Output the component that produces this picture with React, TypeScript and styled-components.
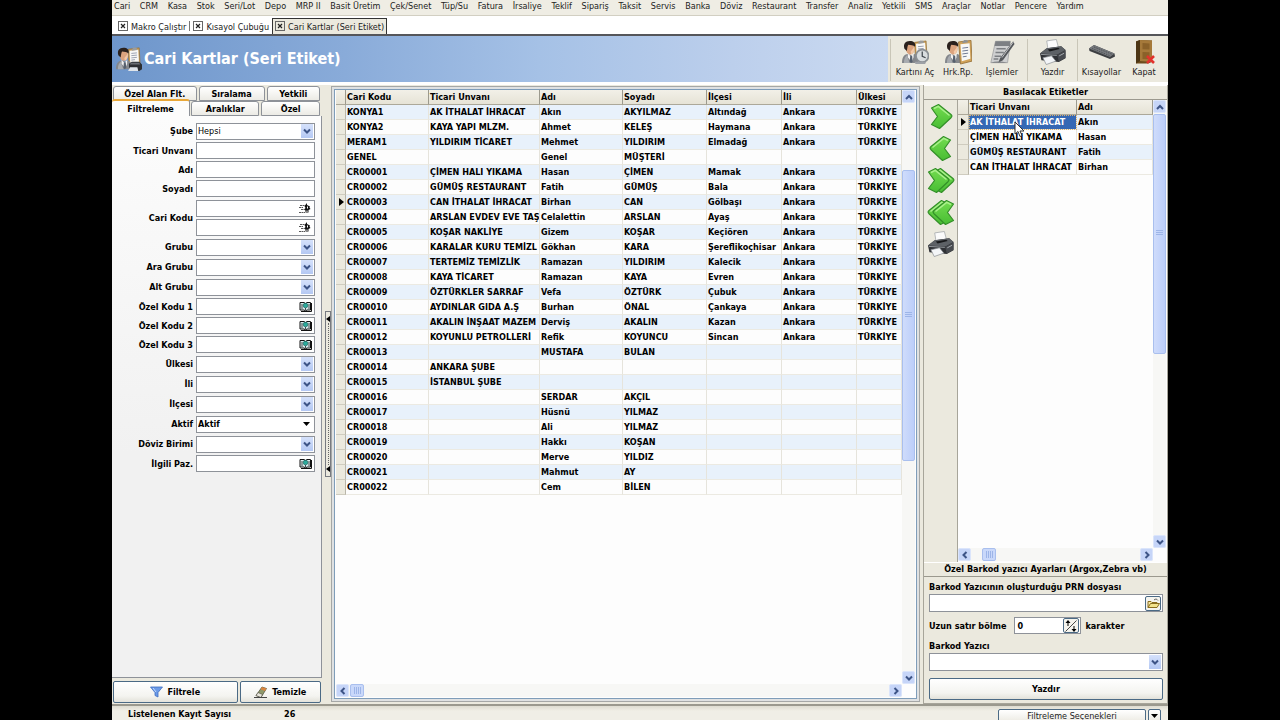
import React from 'react';
import styled, { createGlobalStyle, css } from 'styled-components';

const face = '#ebe9de';
const line = '#8e9299';

const Global = createGlobalStyle`
  *, *::before, *::after { box-sizing: border-box; }
  body {
    margin: 0;
    background: #000;
    color: #000;
    font: 400 9px/12px "DejaVu Sans Condensed", "DejaVu Sans", Tahoma, sans-serif;
    overflow: hidden;
  }
  button, input, select { font: inherit; color: inherit; margin: 0; padding: 0; border-radius: 0; outline: 0; }
  svg { display: block; flex: none; }
`;

const Desktop = styled.div`
  height: 100vh;
  padding: 0 112px;
  display: flex;
`;
const Window = styled.div`
  flex: 1;
  min-width: 0;
  background: ${face};
  display: flex;
  flex-direction: column;
`;

/* ---------- menu and document tabs ---------- */
const MenuBar = styled.nav`
  height: 16px;
  padding: 0 84px 0 2px;
  display: flex;
  justify-content: space-between;
  background: #efede4;
  border-bottom: 1px solid #d2cfc2;
`;
const MenuItem = styled.a`
  color: #222;
  text-decoration: none;
  white-space: nowrap;
`;
const DocTabs = styled.div`
  height: 20px;
  padding: 2px 0 0 3px;
  display: flex;
  background: #fff;
  border-bottom: 2px solid #55565a;
`;
const DocTab = styled.button<{ $active?: boolean }>`
  display: flex;
  align-items: center;
  gap: 2px;
  padding: 0 2px;
  white-space: nowrap;
  color: #222;
  background: ${p => (p.$active ? face : 'transparent')};
  border: 1px solid ${p => (p.$active ? '#333' : 'transparent')};
  border-bottom: 0;
`;
const TabDivider = styled.span`
  width: 1px;
  margin: 3px 0;
  background: #777;
`;

/* ---------- banner ---------- */
const Banner = styled.header`
  height: 46px;
  flex: none;
  display: flex;
  background: ${face};
`;
const BannerTitle = styled.div`
  flex: 1;
  min-width: 0;
  padding-left: 4px;
  display: flex;
  align-items: center;
  gap: 2px;
  background: linear-gradient(90deg, #6e96cb 0%, #89abd9 30%, #a5c1e6 55%, #bccfec 80%, #cbdaf1 100%);
`;
const Title = styled.h1`
  margin: 0;
  font-size: 16px;
  line-height: 20px;
  color: #fff;
  white-space: nowrap;
`;
const Tools = styled.div`
  display: flex;
  padding: 3px 5px 0 2px;
`;
const Tool = styled.button<{ $w: number }>`
  width: ${p => p.$w}px;
  height: 40px;
  border: 0;
  background: none;
  display: flex;
  flex-direction: column;
  align-items: center;
  gap: 1px;
  white-space: nowrap;
  color: #222;
`;
const ToolDivider = styled.span`
  width: 1px;
  height: 42px;
  background: #c9c6b8;
`;

/* ---------- work area ---------- */
const Work = styled.main`
  flex: 1;
  min-height: 0;
  display: flex;
  border-top: 3px solid #fff;
`;

const FilterPane = styled.section`
  width: 210px;
  display: flex;
  flex-direction: column;
  padding: 1px 0 1px 0;
`;
const TabRow = styled.div`
  display: flex;
  gap: 2px;
  padding: 0 2px 0 1px;
`;
const PageTab = styled.button<{ $w: number; $active?: boolean }>`
  flex: ${p => p.$w} 1 0;
  height: 15px;
  font-weight: 700;
  white-space: nowrap;
  border: 1px solid ${line};
  border-radius: 3px 3px 0 0;
  background: linear-gradient(#fff, #ecebe5);
  ${p =>
    p.$active &&
    css`
      height: 17px;
      margin: -2px -1px 0 -1px;
      border-top: 2px solid #e9a83a;
      border-left: 0;
      border-bottom: 0;
      background: #fcfcfc;
    `}
`;
const FilterPage = styled.form`
  flex: 1;
  min-height: 0;
  padding: 5px 6px 0 0;
  background: linear-gradient(#fcfcfc, #f1f1f1 60%);
  border-right: 1px solid ${line};
  border-bottom: 1px solid ${line};
`;
const FieldRow = styled.div<{ $h: number }>`
  min-height: ${p => p.$h}px;
  display: grid;
  grid-template-columns: 81px 1fr;
  column-gap: 3px;
  align-items: center;
  font-weight: 700;
`;
const FieldLabel = styled.label`
  text-align: right;
  white-space: nowrap;
`;
const FieldStack = styled.div`
  display: grid;
  gap: 2px;
`;
const Field = styled.div`
  height: 17px;
  min-width: 0;
  display: flex;
  align-items: center;
  padding-right: 1px;
  background: #fff;
  border: 1px solid ${line};
`;
const TextInput = styled.input`
  flex: 1;
  min-width: 0;
  width: 100%;
  height: 100%;
  padding-left: 2px;
  border: 0;
  background: none;
`;
const Choice = styled.select<{ $light?: boolean }>`
  flex: 1;
  min-width: 0;
  height: 100%;
  padding-left: 1px;
  appearance: none;
  border: 0;
  background: none;
  font-weight: ${p => (p.$light ? 400 : 700)};
`;
const DropMark = styled.span`
  width: 12px;
  height: 14px;
  display: grid;
  place-items: center;
  background: linear-gradient(#d5e1fb, #b4c8f3);
`;
const PlainMark = styled(DropMark)`
  width: 14px;
  background: none;
`;
const IconButton = styled.button`
  border: 0;
  background: none;
  display: grid;
  place-items: center;
  width: 16px;
  height: 14px;
`;
const FilterActions = styled.div`
  display: flex;
  gap: 2px;
  padding: 3px 1px 0;
`;
const PushButton = styled.button<{ $grow?: number }>`
  flex: ${p => p.$grow ?? 1} 1 0;
  height: 22px;
  display: flex;
  align-items: center;
  justify-content: center;
  gap: 4px;
  font-weight: 700;
  background: linear-gradient(#fff, #f4f4f0 70%, #e3e2da);
  border: 1px solid #4b6a85;
  border-radius: 2px;
`;

const Splitter = styled.div`
  width: 9px;
  display: flex;
  justify-content: flex-end;
  align-items: flex-start;
  padding-top: 226px;
`;
const Grip = styled.button`
  width: 6px;
  height: 166px;
  border: 1px solid #777a80;
  background: ${face};
  display: flex;
  flex-direction: column;
  align-items: center;
  justify-content: space-between;
  padding: 4px 0;
`;
const GripDots = styled.span`
  flex: 1;
  margin: 1px 0;
  border-left: 1px dotted #666;
`;

/* ---------- data grids ---------- */
const GridPane = styled.section`
  flex: 1;
  min-width: 0;
  display: flex;
  margin: 1px 3px 2px 0;
  padding: 2px;
  border: 1px solid #a5a7a6;
  background: #dfe1e2;
`;
const GridBox = styled.div`
  flex: 1;
  min-width: 0;
  min-height: 0;
  display: grid;
  grid-template-columns: minmax(0, 1fr) 13px;
  grid-template-rows: minmax(0, 1fr) 13px;
  background: #fdfdfd;
  border: 1px solid #7f9db9;
  padding: 0 1px 1px;
`;
const TableView = styled.div`
  overflow: hidden;
`;
const Table = styled.table`
  width: 100%;
  table-layout: fixed;
  border-collapse: separate;
  border-spacing: 0;
  font-weight: 700;
`;
const Col = styled.col<{ $w?: number }>`
  width: ${p => (p.$w ? p.$w + 'px' : 'auto')};
`;
const HeadCell = styled.th`
  height: 15px;
  padding: 0 0 0 1px;
  text-align: left;
  white-space: nowrap;
  overflow: hidden;
  background: linear-gradient(#f2f0e8, #e6e3d6);
  border-right: 1px solid #9c9a8e;
  border-bottom: 1px solid #aca899;
`;
const Row = styled.tr`
  background: #fdfdfd;
  &:nth-child(odd) { background: #e8f1fb; }
`;
const Cell = styled.td<{ $selected?: boolean }>`
  height: 15px;
  padding: 0 0 0 1px;
  white-space: nowrap;
  overflow: hidden;
  border-right: 1px solid #e6e4dc;
  border-bottom: 1px solid #eceae2;
  ${p =>
    p.$selected &&
    css`
      color: #fff;
      background: #3568b4;
      outline: 1px dotted #d8b070;
      outline-offset: -1px;
    `}
`;
const Marker = styled.td`
  height: 15px;
  padding: 0 0 0 3px;
  background: ${face};
  border-right: 1px solid #b9b6a9;
  border-bottom: 1px solid #cfccbf;
`;

const Bar = styled.div<{ $vertical?: boolean }>`
  display: flex;
  flex-direction: ${p => (p.$vertical ? 'column' : 'row')};
  background: #f7f7f5;
`;
const BarButton = styled.button`
  flex: none;
  width: 13px;
  height: 13px;
  display: grid;
  place-items: center;
  border: 1px solid #dbe5fb;
  border-radius: 2px;
  background: #c6d5f8;
`;
const Track = styled.span<{ $grow: number }>`
  flex: ${p => p.$grow} 1 0;
`;
const Thumb = styled.span<{ $grow?: number; $vertical?: boolean }>`
  flex: ${p => (p.$grow ? `${p.$grow} 1 0` : '0 0 14px')};
  display: grid;
  place-items: center;
  border: 1px solid #a9bfee;
  border-radius: 2px;
  background: ${p =>
    p.$vertical ? 'linear-gradient(90deg, #cfdcfb, #bccefa)' : '#c9d8fa'};
`;

/* ---------- label printing pane ---------- */
const LabelPane = styled.section`
  width: 245px;
  display: flex;
  flex-direction: column;
  border: 1px solid #a7a59a;
  border-width: 0 1px 1px 1px;
`;
const PaneTitle = styled.h2`
  margin: 0;
  height: 15px;
  font-size: 9px;
  line-height: 13px;
  text-align: center;
  border-top: 1px solid #fff;
  border-bottom: 1px solid #9b998e;
  background: ${face};
`;
const LabelArea = styled.div`
  flex: 1;
  min-height: 0;
  display: flex;
`;
const MoveTools = styled.div`
  width: 34px;
  padding-top: 2px;
  display: flex;
  flex-direction: column;
  align-items: center;
  gap: 4px;
  border-right: 1px solid #a7a59a;
`;
const MoveButton = styled.button`
  width: 28px;
  height: 28px;
  border: 0;
  background: none;
  display: grid;
  place-items: center;
`;
const ListHolder = styled.div`
  flex: 1;
  min-width: 0;
  display: flex;
  position: relative;
`;
const ListBox = styled(GridBox)`
  border: 0;
  padding: 0 1px 1px 0;
`;
const Pointer = styled.svg`
  position: absolute;
  left: 56px;
  top: 21px;
`;
const PrinterForm = styled.form`
  padding: 4px 4px 3px 5px;
  display: flex;
  flex-direction: column;
  font-weight: 700;
`;
const FormLabel = styled.label`
  display: block;
`;
const WideField = styled(Field)`
  height: 18px;
  margin: 1px 0 5px;
`;
const InlineRow = styled.div`
  display: flex;
  align-items: center;
  gap: 4px;
  margin-bottom: 6px;
`;
const SubmitRow = styled.div`
  display: flex;
  padding-top: 2px;
`;
const NumberField = styled(Field)`
  width: 67px;
  margin-left: 4px;
`;
const Boxed = styled(IconButton)`
  border: 1px solid #4b6a85;
  border-radius: 2px;
  background: #f5f4ee;
  height: 15px;
`;

/* ---------- status bar ---------- */
const Status = styled.footer`
  height: 16px;
  flex: none;
  display: flex;
  align-items: flex-start;
  border-top: 2px solid #9b998e;
  background: linear-gradient(#dedcd0, #f0eee6 5px);
`;
const StatusText = styled.span`
  width: 142px;
  padding: 2px 0 0 16px;
  font-weight: 700;
`;
const StatusValue = styled.output`
  flex: 1;
  padding: 2px 0 0 30px;
  font-weight: 700;
`;
const StatusButton = styled.button<{ $w: number }>`
  width: ${p => p.$w}px;
  height: 14px;
  margin: 3px 2px 0 0;
  color: #222;
  border: 1px solid #4b6a85;
  border-radius: 2px;
  background: linear-gradient(#fff, #eceae2);
  display: grid;
  place-items: center;
  line-height: 10px;
`;
const StatusEnd = styled.span`
  width: 5px;
`;

/* ---------- drawings ---------- */
const Chevron = ({ dir }: { dir: 'up' | 'down' | 'left' | 'right' }) => {
  const d = {
    up: 'M1 6 4 3l3 3',
    down: 'M1 2.500 4 5.500l3-3',
    left: 'M5.500 1 2.500 4l3 3',
    right: 'M2.500 1l3 3-3 3',
  }[dir];
  return (
    <svg width="8" height="8" viewBox="0 0 8 8" fill="none" stroke="#3d5486" strokeWidth="2" aria-hidden>
      <path d={d} />
    </svg>
  );
};
const CloseBox = () => (
  <svg width="11" height="11" viewBox="0 0 11 11" fill="none" stroke="#222" aria-hidden>
    <rect x=".5" y=".5" width="9" height="9" stroke="#666" />
    <path d="M3 3l4 4m0-4-4 4" strokeWidth="1.200" />
  </svg>
);
const Triangle = () => (
  <svg width="6" height="8" viewBox="0 0 6 8" aria-hidden>
    <path d="M0 0l5 4-5 4z" />
  </svg>
);
const DownTriangle = () => (
  <svg width="7" height="4" viewBox="0 0 7 4" aria-hidden>
    <path d="M0 0h7L3.500 4z" />
  </svg>
);
const Person = () => (
  <g>
    <path d="M0 25c0-6 2-9 6-9.500l4 1.500 3-1.500c3 1 4 4 4 9.500z" fill="#84878c" />
    <path d="M2 25c0-4 1-6 3-8l3 8z" fill="#a7abb0" />
    <path d="M6 15l3 3 3-3v4l-2 5-4-5z" fill="#f2f2f2" />
    <path d="M8.500 17.500h2l.5 6-1.500 1.500L8 23.500z" fill="#56606e" />
    <ellipse cx="8.500" cy="10" rx="4.500" ry="6" fill="#dba37e" />
    <path d="M9 13c1.500-2 3-3 3.500-5.500.8 4-.5 7.500-3 8.300z" fill="#f3c9a8" />
    <path d="M2.500 10C1 5 3.500 2 8 2c4 0 6.500 2 5.500 6C12 6.500 9 6.500 6.500 6c-1 1.500-1 4-1.500 6.500z" fill="#2a211d" />
  </g>
);
const Clipboard = () => (
  <g>
    <path d="M13 3.500 25 2l1 18-12 2z" fill="#c99d55" stroke="#8f6b34" strokeWidth=".7" />
    <path d="M14.500 5 24 4l.8 14.500L15.500 20z" fill="#f8f8f6" />
    <path d="M17 3.500 19 1.500l3 .2 1 2.500-6 .8z" fill="#9b9c9c" />
    <path d="M16.500 8l6-.6m-6 3 6-.6m-6 3 6-.6m-6 3 4-.5" stroke="#8b93a5" strokeWidth=".9" />
  </g>
);
const TitleIcon = () => (
  <svg width="26" height="26" viewBox="0 0 28 28" aria-hidden>
    <Clipboard />
    <Person />
    <path d="M14 19l3-2h8l3 3v5l-3 2H14z" fill="#2e3034" />
    <path d="M16 18h9l1 2H15z" fill="#6a6e74" />
    <path d="M15 23h8l1 4H13z" fill="#dfe4ea" />
  </svg>
);
const CardIcon = () => (
  <svg width="27" height="26" viewBox="0 0 28 27" aria-hidden>
    <Clipboard />
    <Person />
    <circle cx="21" cy="17.500" r="6.500" fill="#d9dddf" stroke="#8a8f94" strokeWidth="1.800" />
    <path d="M21 13v5l3.500 1.500" fill="none" stroke="#3f464d" strokeWidth="1.300" />
    <path d="M13 23.500h12l-1 2.500H14z" fill="#9da1a6" />
  </svg>
);
const ReportIcon = () => (
  <svg width="27" height="26" viewBox="0 0 28 27" aria-hidden>
    <Person />
    <path d="M14 3 27 1.500 28 23l-12 3z" fill="#d1a35a" stroke="#8f6b34" strokeWidth=".8" />
    <path d="M16 5.500 25.500 4.500l.8 16L17.500 23z" fill="#f8f8f6" />
    <path d="M18 3.500 20 1l3 .2 1 2.300-6 1z" fill="#8f9294" />
    <path d="M18 9.500l6-.8m-6 3.800 6-.8m-6 3.800 6-.8m-5.500 3.800 4-.6" stroke="#6b7690" strokeWidth="1" />
  </svg>
);
const TasksIcon = () => (
  <svg width="26" height="26" viewBox="0 0 28 27" aria-hidden>
    <path d="M7 2h16l-3 23H2z" fill="#cfd0d1" stroke="#9b9c9e" strokeWidth=".8" />
    <path d="M7 2h16l-.6 5H6z" fill="#7d8084" />
    <path d="M8 10h10m-11 4h9m-10 4h7m-8 3h5" stroke="#7c7f83" strokeWidth="1.600" />
    <path d="M26 2 12 20l-2 5 5-2.500L27.500 5z" fill="#55585c" />
    <path d="M26 3 14 19.500" stroke="#c9cbcd" strokeWidth="1" />
    <path d="M2 25c6-2 12-1 18 0z" fill="#7b7e82" />
  </svg>
);
const PrinterIcon = () => (
  <svg width="27" height="26" viewBox="0 0 28 27" aria-hidden>
    <path d="M8 2 18 .5 20.500 10l-11 2z" fill="#fbfbfb" stroke="#a3a6ab" strokeWidth=".8" />
    <path d="M1 15 8 9.500 23 7.500l4.500 4V20l-7 4-18-2z" fill="#303236" />
    <path d="M1 15 8 9.500 23 7.500l4.500 4-8.500 4.500z" fill="#5d6166" />
    <path d="M9 11 20 9l1.500 1.500L11 13z" fill="#18191b" />
    <path d="M19 16.500 27.500 12v7.500l-7 4z" fill="#484b50" />
    <path d="M21 17.500l5-2.700" stroke="#a9adb2" />
    <path d="M4 19.500 13 17.500l4.500 5.500-10 3.500z" fill="#f3f5f7" stroke="#85898e" strokeWidth=".7" />
    <path d="M2 16 18.500 17" stroke="#a4a8ad" strokeWidth=".9" />
  </svg>
);
const ShortcutIcon = () => (
  <svg width="28" height="26" viewBox="0 0 28 26" aria-hidden>
    <path d="M1 9.500 6 6l20.500 8.500.5 3L22 20 1.500 12z" fill="#3d3f42" />
    <path d="M1 9.500 6 6l20.500 8.500L22 18z" fill="#75787c" />
    <path d="M4 9.500l17.500 7M6 8l18 7.200" stroke="#4d5054" strokeWidth=".9" strokeDasharray="1.500 1" />
  </svg>
);
const CloseIcon = () => (
  <svg width="24" height="26" viewBox="0 0 24 26" aria-hidden>
    <path d="M4 2.500 8 1l12 .5V23l-4 1.500H4z" fill="#6e4c1c" />
    <path d="M8 1l12 .5V23L8 22z" fill="#a5793a" />
    <path d="M10.500 4l7 .4v6l-7-.2zM10.500 13l7 .2v7l-7-.3z" fill="#8a6129" />
    <path d="M4 2.500 8 1v21l-4 2.500z" fill="#4c3514" />
    <path d="M15 17l7 7m0-7-7 7" stroke="#e2322c" strokeWidth="2.600" />
  </svg>
);
const ArrowShape = ({ x }: { x: number }) => (
  <g transform={`translate(${x} 0)`}>
    <path
      d="M1.500 5 8.500 1.500 21 11.500c1.200 1 1.200 2 0 3.200L9.500 25.500 1.500 21.500 7.500 13.500z"
      fill="url(#leaf)"
      stroke="#338f28"
      strokeWidth="1.200"
      strokeLinejoin="round"
    />
    <path d="M4 5.500 8.300 3.300l11.200 9.200" fill="none" stroke="#a9ef8b" strokeWidth="1.500" />
  </g>
);
const ArrowIcon = ({ left, twice }: { left?: boolean; twice?: boolean }) => (
  <svg width="28" height="27" viewBox="0 0 28 27" aria-hidden>
    <defs>
      <linearGradient id="leaf" x1="0" y1="0" x2="0" y2="1">
        <stop offset="0" stopColor="#74dc50" />
        <stop offset="1" stopColor="#48bd33" />
      </linearGradient>
    </defs>
    <g transform={left ? 'translate(28 0) scale(-1 1)' : undefined}>
      {twice ? (
        <>
          <ArrowShape x={5} />
          <ArrowShape x={0} />
        </>
      ) : (
        <ArrowShape x={3} />
      )}
    </g>
  </svg>
);
const BookIcon = () => (
  <svg width="13" height="11" viewBox="0 0 13 11" aria-hidden>
    <path d="M1 1.500h4l1.500 1L8 1.500h3.500V9H8l-1.500 1L5 9H1z" fill="#d9eef0" stroke="#111" />
    <path d="M12.500 2v8.500H2" fill="none" stroke="#111" />
    <circle cx="6.500" cy="4.500" r="2.300" fill="#2cab9c" stroke="#0d5850" strokeWidth=".6" />
    <path d="M3 3v5M10 3v5M6.500 7v2.500" stroke="#222" strokeWidth=".8" />
  </svg>
);
const PickIcon = () => (
  <svg width="12" height="11" viewBox="0 0 12 11" aria-hidden>
    <path d="M1 2.500h5M0 4.500h4M2 6.500h3M0 9.500h6" stroke="#555" strokeDasharray="2 .5" />
    <path d="M5.500 3 8 0v2l3 1.500-.5 1 1 1.500-2 1v2.500h-3V7.500L5 6.500l1.500-1.500z" fill="#111" />
    <path d="M8.500 3.500v2M8 7.500v1.500" stroke="#fff" />
  </svg>
);
const FunnelIcon = () => (
  <svg width="13" height="12" viewBox="0 0 13 12" aria-hidden>
    <path d="M.5 1h12L8 6.500v4.500l-3-1.500v-3z" fill="#6c9be8" stroke="#3e6cc0" strokeWidth=".8" />
    <path d="M3 2l3 4" stroke="#c5dbff" />
  </svg>
);
const EraserIcon = () => (
  <svg width="14" height="13" viewBox="0 0 14 13" aria-hidden>
    <path d="M2 9.500 8 1l4.500 1.500L7 11.500z" fill="#8f9a6c" stroke="#4a4a3a" strokeWidth=".7" />
    <path d="M8 1l4.500 1.500L11 5 6.500 3.300z" fill="#d9853f" />
    <path d="M2 9.500l2-3 4.500 2L7 11.500z" fill="#e9e6de" stroke="#4a4a3a" strokeWidth=".6" />
    <path d="M0 11.500h13" stroke="#444" />
  </svg>
);
const FolderIcon = () => (
  <svg width="13" height="11" viewBox="0 0 13 11" aria-hidden>
    <path d="M1 9.500v-6h3l1 1h5v2" fill="#f7e9a4" stroke="#8a6d1e" />
    <path d="M1 9.500l2.500-4h9l-2.500 4z" fill="#f3e38c" stroke="#8a6d1e" />
    <path d="M7 2c1.500-1.500 3-1 4 .5" fill="none" stroke="#555" strokeWidth=".9" />
  </svg>
);
const StepIcon = () => (
  <svg width="12" height="12" viewBox="0 0 12 12" aria-hidden>
    <path d="M11.500.5l-11 11" stroke="#333" strokeWidth=".9" />
    <path d="M3 0l2.500 3h-2v3h-1V3h-2zM9 12 6.500 9h2V6h1v3h2z" />
  </svg>
);

/* ---------- data ---------- */
const menu = ['Cari', 'CRM', 'Kasa', 'Stok', 'Seri/Lot', 'Depo', 'MRP II', 'Basit Üretim', 'Çek/Senet', 'Tüp/Su', 'Fatura', 'İrsaliye', 'Teklif', 'Sipariş', 'Taksit', 'Servis', 'Banka', 'Döviz', 'Restaurant', 'Transfer', 'Analiz', 'Yetkili', 'SMS', 'Araçlar', 'Notlar', 'Pencere', 'Yardım'];

const heads = ['Cari Kodu', 'Ticari Unvanı', 'Adı', 'Soyadı', 'İlçesi', 'İli', 'Ülkesi'];
const tr = ['Ankara', 'TÜRKİYE'];
const rows: string[][] = [
  ['KONYA1', 'AK İTHALAT İHRACAT', 'Akın', 'AKYILMAZ', 'Altındağ', ...tr],
  ['KONYA2', 'KAYA YAPI MLZM.', 'Ahmet', 'KELEŞ', 'Haymana', ...tr],
  ['MERAM1', 'YILDIRIM TİCARET', 'Mehmet', 'YILDIRIM', 'Elmadağ', ...tr],
  ['GENEL', '', 'Genel', 'MÜŞTERİ', '', '', ''],
  ['CR00001', 'ÇİMEN HALI YIKAMA', 'Hasan', 'ÇİMEN', 'Mamak', ...tr],
  ['CR00002', 'GÜMÜŞ RESTAURANT', 'Fatih', 'GÜMÜŞ', 'Bala', ...tr],
  ['CR00003', 'CAN İTHALAT İHRACAT', 'Birhan', 'CAN', 'Gölbaşı', ...tr],
  ['CR00004', 'ARSLAN EVDEV EVE TAŞ', 'Celalettin', 'ARSLAN', 'Ayaş', ...tr],
  ['CR00005', 'KOŞAR NAKLİYE', 'Gizem', 'KOŞAR', 'Keçiören', ...tr],
  ['CR00006', 'KARALAR KURU TEMİZL', 'Gökhan', 'KARA', 'Şereflikoçhisar', ...tr],
  ['CR00007', 'TERTEMİZ TEMİZLİK', 'Ramazan', 'YILDIRIM', 'Kalecik', ...tr],
  ['CR00008', 'KAYA TİCARET', 'Ramazan', 'KAYA', 'Evren', ...tr],
  ['CR00009', 'ÖZTÜRKLER SARRAF', 'Vefa', 'ÖZTÜRK', 'Çubuk', ...tr],
  ['CR00010', 'AYDINLAR GIDA A.Ş', 'Burhan', 'ÖNAL', 'Çankaya', ...tr],
  ['CR00011', 'AKALIN İNŞAAT MAZEM', 'Derviş', 'AKALIN', 'Kazan', ...tr],
  ['CR00012', 'KOYUNLU PETROLLERİ', 'Refik', 'KOYUNCU', 'Sincan', ...tr],
  ['CR00013', '', 'MUSTAFA', 'BULAN', '', '', ''],
  ['CR00014', 'ANKARA ŞUBE', '', '', '', '', ''],
  ['CR00015', 'İSTANBUL ŞUBE', '', '', '', '', ''],
  ['CR00016', '', 'SERDAR', 'AKÇIL', '', '', ''],
  ['CR00017', '', 'Hüsnü', 'YILMAZ', '', '', ''],
  ['CR00018', '', 'Ali', 'YILMAZ', '', '', ''],
  ['CR00019', '', 'Hakkı', 'KOŞAN', '', '', ''],
  ['CR00020', '', 'Merve', 'YILDIZ', '', '', ''],
  ['CR00021', '', 'Mahmut', 'AY', '', '', ''],
  ['CR00022', '', 'Cem', 'BİLEN', '', '', ''],
];
const labels: string[][] = [
  ['AK İTHALAT İHRACAT', 'Akın'],
  ['ÇİMEN HALI YIKAMA', 'Hasan'],
  ['GÜMÜŞ RESTAURANT', 'Fatih'],
  ['CAN İTHALAT İHRACAT', 'Birhan'],
];

type Kind = 'combo' | 'text' | 'pick' | 'book' | 'plain';
const fields: { label: string; kind: Kind; value?: string }[] = [
  { label: 'Şube', kind: 'combo', value: 'Hepsi' },
  { label: 'Ticari Unvanı', kind: 'text' },
  { label: 'Adı', kind: 'text' },
  { label: 'Soyadı', kind: 'text' },
  { label: 'Cari Kodu', kind: 'pick' },
  { label: 'Grubu', kind: 'combo' },
  { label: 'Ara Grubu', kind: 'combo' },
  { label: 'Alt Grubu', kind: 'combo' },
  { label: 'Özel Kodu 1', kind: 'book' },
  { label: 'Özel Kodu 2', kind: 'book' },
  { label: 'Özel Kodu 3', kind: 'book' },
  { label: 'Ülkesi', kind: 'combo' },
  { label: 'İli', kind: 'combo' },
  { label: 'İlçesi', kind: 'combo' },
  { label: 'Aktif', kind: 'plain', value: 'Aktif' },
  { label: 'Döviz Birimi', kind: 'combo' },
  { label: 'İlgili Paz.', kind: 'book' },
];
const rowHeight: Record<Kind, number> = { combo: 20, plain: 20, text: 19, book: 19, pick: 39 };

const ScrollBar = ({ vertical, before, thumb, after }: { vertical?: boolean; before: number; thumb?: number; after: number }) => (
  <Bar $vertical={vertical}>
    <BarButton type="button" aria-label={vertical ? 'Yukarı' : 'Sola'}>
      <Chevron dir={vertical ? 'up' : 'left'} />
    </BarButton>
    <Track $grow={before} />
    <Thumb $grow={thumb} $vertical={vertical}>
      <svg width="7" height="7" viewBox="0 0 7 7" stroke="#9db5e8" aria-hidden>
        <path d={vertical ? 'M0 .5h7M0 2.500h7M0 4.500h7' : 'M.5 0v7M2.500 0v7M4.500 0v7M6.500 0v7'} />
      </svg>
    </Thumb>
    <Track $grow={after} />
    <BarButton type="button" aria-label={vertical ? 'Aşağı' : 'Sağa'}>
      <Chevron dir={vertical ? 'down' : 'right'} />
    </BarButton>
  </Bar>
);

const DataTable = ({ columns, widths, data, current, selected }: { columns: string[]; widths: number[]; data: string[][]; current: number; selected?: boolean }) => (
  <TableView>
    <Table>
      <colgroup>
        {widths.map((w, i) => (
          <Col key={i} $w={w} />
        ))}
      </colgroup>
      <thead>
        <tr>
          <HeadCell />
          {columns.map(c => (
            <HeadCell key={c} scope="col">{c}</HeadCell>
          ))}
        </tr>
      </thead>
      <tbody>
        {data.map((r, i) => (
          <Row key={i}>
            <Marker>{i === current && <Triangle />}</Marker>
            {r.map((v, j) => (
              <Cell key={j} $selected={selected && i === current && j === 0}>{v}</Cell>
            ))}
          </Row>
        ))}
      </tbody>
    </Table>
  </TableView>
);

const FilterField = ({ label, kind, value, index }: { label: string; kind: Kind; value?: string; index: number }) => {
  const id = `filter-${index}`;
  let control: React.ReactNode;
  if (kind === 'combo' || kind === 'plain') {
    control = (
      <Field>
        <Choice id={id} $light={kind === 'combo'} defaultValue={value ?? ''}>
          <option>{value ?? ''}</option>
        </Choice>
        {kind === 'combo' ? (
          <DropMark><Chevron dir="down" /></DropMark>
        ) : (
          <PlainMark><DownTriangle /></PlainMark>
        )}
      </Field>
    );
  } else if (kind === 'pick') {
    control = (
      <FieldStack>
        <Field>
          <TextInput id={id} />
          <IconButton type="button" aria-label="Cari seç (ilk)"><PickIcon /></IconButton>
        </Field>
        <Field>
          <TextInput aria-label="Cari Kodu (son)" />
          <IconButton type="button" aria-label="Cari seç (son)"><PickIcon /></IconButton>
        </Field>
      </FieldStack>
    );
  } else {
    control = (
      <Field>
        <TextInput id={id} />
        {kind === 'book' && (
          <IconButton type="button" aria-label={`${label} listesi`}><BookIcon /></IconButton>
        )}
      </Field>
    );
  }
  return (
    <FieldRow $h={rowHeight[kind]}>
      <FieldLabel htmlFor={id}>{label}</FieldLabel>
      {control}
    </FieldRow>
  );
};

export default function App() {
  return (
    <>
      <Global />
      <Desktop lang="tr">
        <Window>
          <MenuBar>
            {menu.map(m => (
              <MenuItem key={m} href="#">{m}</MenuItem>
            ))}
          </MenuBar>
          <DocTabs>
            <DocTab><CloseBox />Makro Çalıştır</DocTab>
            <TabDivider />
            <DocTab><CloseBox />Kısayol Çubuğu</DocTab>
            <DocTab $active><CloseBox />Cari Kartlar (Seri Etiket)</DocTab>
          </DocTabs>
          <Banner>
            <BannerTitle>
              <TitleIcon />
              <Title>Cari Kartlar (Seri Etiket)</Title>
            </BannerTitle>
            <Tools>
              <ToolDivider />
              <Tool $w={48}><CardIcon />Kartını Aç</Tool>
              <Tool $w={38}><ReportIcon />Hrk.Rp.</Tool>
              <Tool $w={50}><TasksIcon />İşlemler</Tool>
              <ToolDivider />
              <Tool $w={49}><PrinterIcon />Yazdır</Tool>
              <ToolDivider />
              <Tool $w={47}><ShortcutIcon />Kısayollar</Tool>
              <Tool $w={38}><CloseIcon />Kapat</Tool>
            </Tools>
          </Banner>
          <Work>
            <FilterPane>
              <TabRow>
                <PageTab $w={84}>Özel Alan Flt.</PageTab>
                <PageTab $w={66}>Sıralama</PageTab>
                <PageTab $w={53}>Yetkili</PageTab>
              </TabRow>
              <TabRow>
                <PageTab $w={79} $active>Filtreleme</PageTab>
                <PageTab $w={68}>Aralıklar</PageTab>
                <PageTab $w={58}>Özel</PageTab>
              </TabRow>
              <FilterPage>
                {fields.map((f, i) => (
                  <FilterField key={f.label} index={i} {...f} />
                ))}
              </FilterPage>
              <FilterActions>
                <PushButton $grow={125}><FunnelIcon />Filtrele</PushButton>
                <PushButton $grow={81}><EraserIcon />Temizle</PushButton>
              </FilterActions>
            </FilterPane>
            <Splitter>
              <Grip aria-label="Paneli gizle">
                <svg width="4" height="6" viewBox="0 0 4 6" aria-hidden><path d="M4 0v6L0 3z" /></svg>
                <GripDots />
                <svg width="4" height="6" viewBox="0 0 4 6" aria-hidden><path d="M4 0v6L0 3z" /></svg>
              </Grip>
            </Splitter>
            <GridPane>
              <GridBox>
                <DataTable columns={heads} widths={[10, 83, 111, 83, 84, 75, 75, 0]} data={rows} current={6} />
                <ScrollBar vertical before={67} thumb={290} after={211} />
                <ScrollBar before={1} after={524} />
              </GridBox>
            </GridPane>
            <LabelPane>
              <PaneTitle>Basılacak Etiketler</PaneTitle>
              <LabelArea>
                <MoveTools>
                  <MoveButton aria-label="Ekle"><ArrowIcon /></MoveButton>
                  <MoveButton aria-label="Çıkar"><ArrowIcon left /></MoveButton>
                  <MoveButton aria-label="Tümünü ekle"><ArrowIcon twice /></MoveButton>
                  <MoveButton aria-label="Tümünü çıkar"><ArrowIcon left twice /></MoveButton>
                  <MoveButton aria-label="Etiketleri yazdır"><PrinterIcon /></MoveButton>
                </MoveTools>
                <ListHolder>
                  <ListBox>
                    <DataTable columns={['Ticari Unvanı', 'Adı']} widths={[11, 108, 0]} data={labels} current={0} selected />
                    <ScrollBar vertical before={1} thumb={239} after={182} />
                    <ScrollBar before={11} after={142} />
                  </ListBox>
                  <Pointer width="11" height="17" viewBox="0 0 11 17" aria-hidden>
                    <path d="M1 1v12l3-2.500 2 5 2-1-2-4.500h4z" fill="#fff" stroke="#333" />
                  </Pointer>
                </ListHolder>
              </LabelArea>
              <PaneTitle>Özel Barkod yazıcı Ayarları (Argox,Zebra vb)</PaneTitle>
              <PrinterForm>
                <FormLabel htmlFor="prn">Barkod Yazıcının oluşturduğu PRN dosyası</FormLabel>
                <WideField>
                  <TextInput id="prn" />
                  <Boxed type="button" aria-label="Dosya seç"><FolderIcon /></Boxed>
                </WideField>
                <InlineRow>
                  <FormLabel htmlFor="wrap">Uzun satır bölme</FormLabel>
                  <NumberField>
                    <TextInput id="wrap" defaultValue="0" />
                    <Boxed type="button" aria-label="Değeri değiştir"><StepIcon /></Boxed>
                  </NumberField>
                  <span>karakter</span>
                </InlineRow>
                <FormLabel htmlFor="printer">Barkod Yazıcı</FormLabel>
                <WideField>
                  <Choice id="printer"><option></option></Choice>
                  <DropMark><Chevron dir="down" /></DropMark>
                </WideField>
                <SubmitRow>
                  <PushButton type="button">Yazdır</PushButton>
                </SubmitRow>
              </PrinterForm>
            </LabelPane>
          </Work>
          <Status>
            <StatusText>Listelenen Kayıt Sayısı</StatusText>
            <StatusValue>26</StatusValue>
            <StatusButton $w={148}>Filtreleme Seçenekleri</StatusButton>
            <StatusButton $w={13} aria-label="Seçenekler"><DownTriangle /></StatusButton>
            <StatusEnd />
          </Status>
        </Window>
      </Desktop>
    </>
  );
}
